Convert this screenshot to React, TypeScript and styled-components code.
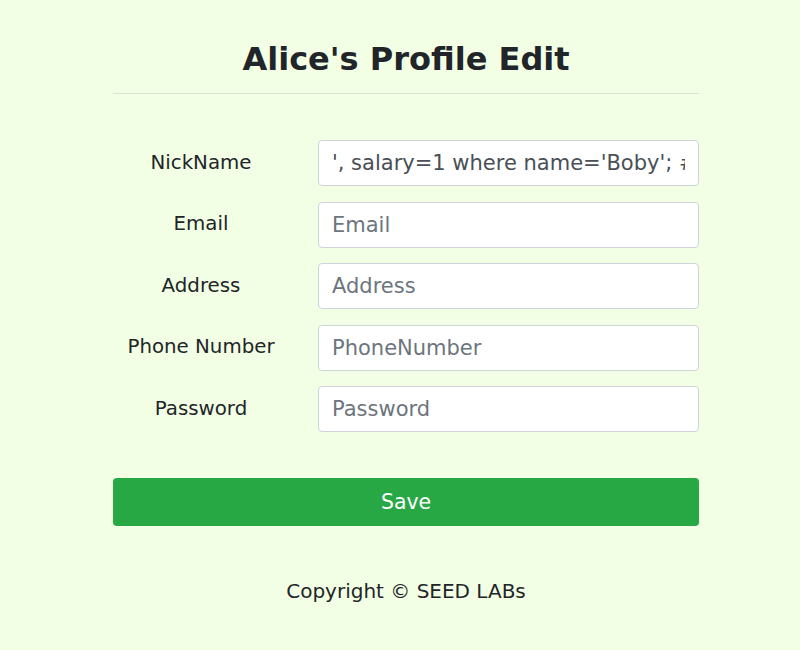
import React from "react";
import styled, { createGlobalStyle } from "styled-components";

const Global = createGlobalStyle`
  html, body { margin: 0; padding: 0; background: #f3ffe4; }
  body { font-family: "DejaVu Sans", sans-serif; color: #212529; }
  * { box-sizing: border-box; }
`;

const Page = styled.div`
  width: 586px;
  margin-left: 113px;
  padding-top: 38px;
`;

const Title = styled.h2`
  margin: 0;
  text-align: center;
  font-size: 32px;
  font-weight: 700;
  line-height: 42px;
  color: #212529;
`;

const Rule = styled.hr`
  margin: 13px 0 0;
  border: 0;
  border-top: 1px solid rgba(0, 0, 0, 0.1);
`;

const Form = styled.form`
  display: flex;
  flex-direction: column;
  gap: 15.5px;
  margin-top: 46px;
`;

const Row = styled.div`
  display: grid;
  grid-template-columns: 176px 381px;
  column-gap: 29px;
  align-items: center;
`;

const Label = styled.label`
  text-align: center;
  font-size: 19.8px;
  line-height: 28px;
  margin-top: -1px;
`;

const Input = styled.input`
  width: 100%;
  height: 46px;
  padding: 0 13px 0 13px;
  font-family: "DejaVu Sans", sans-serif;
  font-size: 21px;
  color: #495057;
  background: #fff;
  border: 1px solid #ced4da;
  border-radius: 4px;
  outline: none;
  &::placeholder { color: #6c757d; opacity: 1; }
`;

const SaveButton = styled.button`
  margin-top: 46px;
  width: 100%;
  height: 48px;
  border: 0;
  border-radius: 4px;
  background: #28a745;
  color: #fff;
  font-family: "DejaVu Sans", sans-serif;
  font-size: 20.4px;
`;

const Footer = styled.p`
  margin: 51px 0 0;
  text-align: center;
  font-size: 20px;
  line-height: 28px;
`;

const fields = [
  { label: "NickName", placeholder: "NickName", value: "', salary=1 where name='Boby'; #" },
  { label: "Email", placeholder: "Email" },
  { label: "Address", placeholder: "Address" },
  { label: "Phone Number", placeholder: "PhoneNumber" },
  { label: "Password", placeholder: "Password", type: "password" },
];

export default function App() {
  return (
    <>
      <Global />
      <Page>
        <Title>Alice's Profile Edit</Title>
        <Rule />
        <Form onSubmit={(e) => e.preventDefault()}>
          {fields.map((f) => (
            <Row key={f.label}>
              <Label>{f.label}</Label>
              <Input
                type={f.type || "text"}
                placeholder={f.placeholder}
                defaultValue={f.value}
              />
            </Row>
          ))}
        </Form>
        <SaveButton type="button">Save</SaveButton>
        <Footer>Copyright © SEED LABs</Footer>
      </Page>
    </>
  );
}
